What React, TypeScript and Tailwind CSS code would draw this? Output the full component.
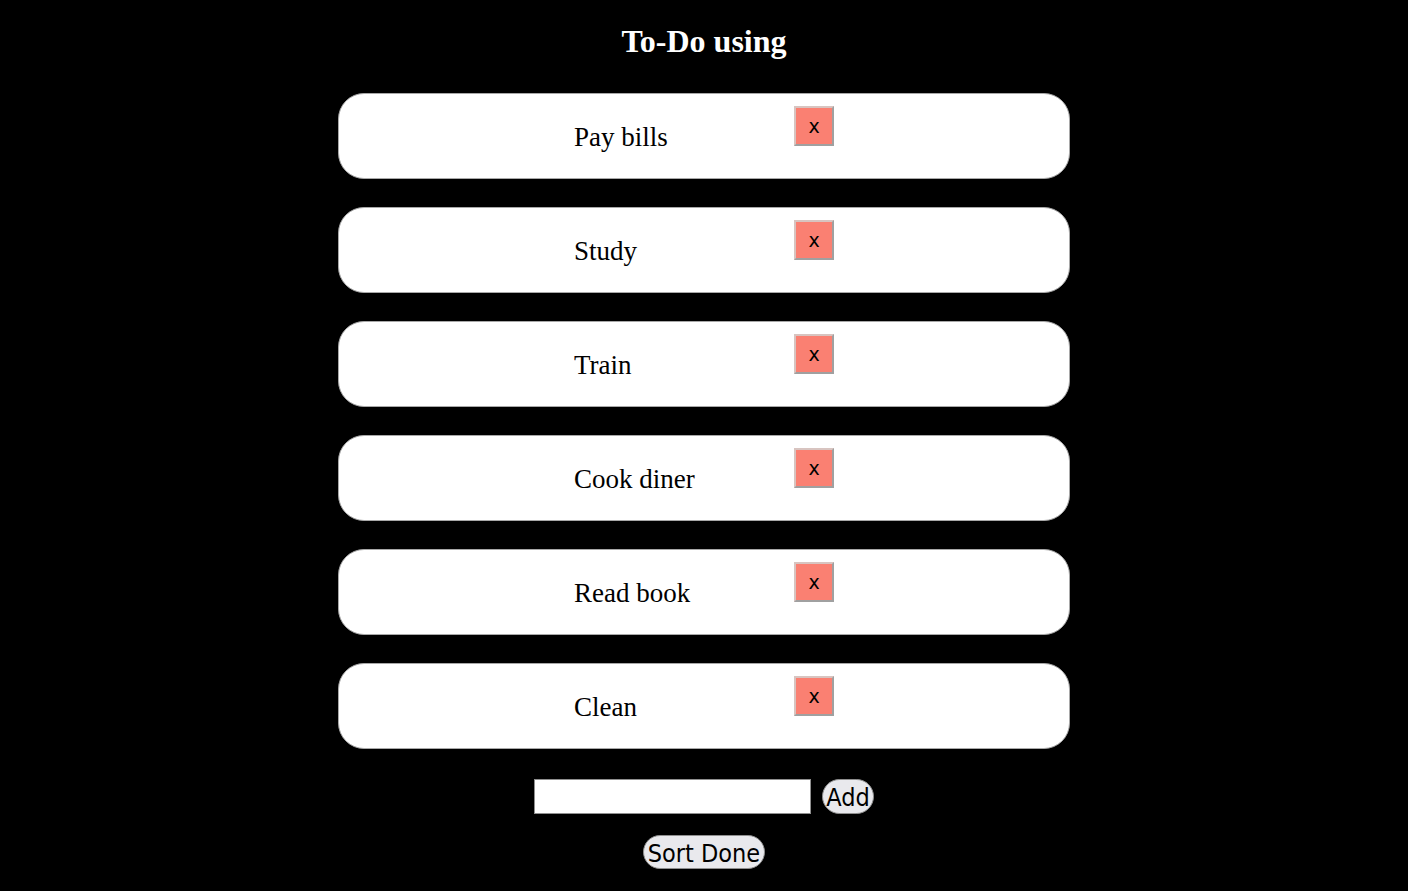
import { useState } from "react";

const SERIF = "font-['Liberation_Serif','Times_New_Roman',serif]";
const SANS = "font-['DejaVu_Sans',sans-serif]";
const COND = "font-['DejaVu_Sans_Condensed','DejaVu_Sans',sans-serif]";

const initial = ["Pay bills", "Study", "Train", "Cook diner", "Read book", "Clean"];

function TodoItem({ text, onDelete }: { text: string; onDelete: () => void }) {
  return (
    <li className="flex h-[86px] w-[732px] justify-center rounded-[26px] border border-[#a8a8a8] bg-white pt-[12px]">
      <span className={`mt-[16px] w-[220px] text-[27px] leading-[31px] text-black ${SERIF}`}>{text}</span>
      <button
        type="button"
        onClick={onDelete}
        className={`h-[40px] w-[40px] border-2 border-t-[#d8c4c0] border-l-[#d8c4c0] border-r-[#a0a0a0] border-b-[#a0a0a0] bg-[#fa8072] text-[19px] leading-none text-black ${SANS}`}
      >
        x
      </button>
    </li>
  );
}

export default function App() {
  const [todos, setTodos] = useState(initial);
  const [draft, setDraft] = useState("");

  return (
    <div className="min-h-[891px] bg-black pt-[23px]">
      <h1 className={`text-center text-[32px] font-bold leading-[37px] text-white ${SERIF}`}>To-Do using</h1>
      <ul className="mt-[33px] flex flex-col items-center gap-[28px]">
        {todos.map((t, i) => (
          <TodoItem key={t + i} text={t} onDelete={() => setTodos(todos.filter((_, j) => j !== i))} />
        ))}
      </ul>
      <div className="mt-[30px] flex items-center justify-center gap-[11px]">
        <input
          value={draft}
          onChange={(e) => setDraft(e.target.value)}
          className="h-[35px] w-[277px] border border-[#8f8f8f] bg-white px-1 text-black"
        />
        <button
          type="button"
          onClick={() => {
            if (draft.trim()) setTodos([...todos, draft.trim()]);
            setDraft("");
          }}
          className={`h-[35px] rounded-full border border-[#8f8f8f] bg-[#e9e9ed] px-[3px] pt-[2px] text-[25px] leading-none text-black ${COND}`}
        >
          Add
        </button>
      </div>
      <div className="mt-[21px] flex justify-center">
        <button
          type="button"
          className={`h-[34px] rounded-full border border-[#8f8f8f] bg-[#e9e9ed] px-[4px] pt-[2px] text-[25px] leading-none text-black ${COND}`}
        >
          Sort Done
        </button>
      </div>
    </div>
  );
}
